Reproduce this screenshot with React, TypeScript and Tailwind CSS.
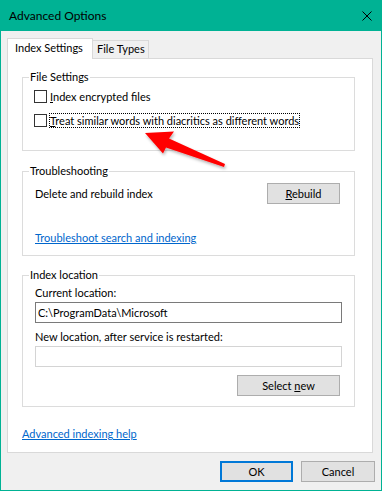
import React from "react";

function Check({ label, accel, focused }: { label: string; accel: string; focused?: boolean }) {
  return (
    <div className="flex h-[16px] items-center">
      <div className="h-[13px] w-[13px] border border-[#333333] bg-white" />
      <span
        className={
          "ml-[2px] whitespace-nowrap border leading-[13px] " +
          (focused ? "border-dotted border-black" : "border-transparent")
        }
      >
        <u>{accel}</u>
        {label}
      </span>
    </div>
  );
}

function Group({ title, className, children }: { title: string; className: string; children: React.ReactNode }) {
  return (
    <div className={"relative w-[333px] border border-[#dcdcdc] " + className}>
      <span className="absolute -top-[9px] left-[6px] whitespace-nowrap bg-white px-[1px] leading-[16px]">{title}</span>
      {children}
    </div>
  );
}

export default function App() {
  return (
    <div className="relative flex h-[491px] w-[382px] flex-col border-x border-b border-[#00b294] bg-[#f0f0f0] font-['Lato',sans-serif] text-[11px] text-black">
      <div className="flex h-[31px] shrink-0 items-center justify-between bg-[#00b294] pl-[8px] pr-[9px]">
        <span className="text-[12px] leading-[16px]">Advanced Options</span>
        <svg width="10" height="10" viewBox="0 0 10 10" className="mt-px">
          <path d="M0.5 0.5 L9.5 9.5 M9.5 0.5 L0.5 9.5" stroke="#000" strokeWidth="1" />
        </svg>
      </div>
      <div className="flex flex-col px-[6px]">
        <div className="relative z-10 -mb-px mt-[7px] flex items-end">
          <div className="h-[21px] w-[86px] whitespace-nowrap border-x border-t border-[#d9d9d9] bg-white pl-[7px] pt-[1px] leading-[16px]">
            Index Settings
          </div>
          <div className="mb-px h-[18px] w-[56px] whitespace-nowrap border-r border-t border-[#d9d9d9] bg-[#f0f0f0] pl-[4px] leading-[16px]">
            File Types
          </div>
        </div>
        <div className="flex h-[395px] w-[366px] flex-col border border-[#d9d9d9] bg-white pl-[14px]">
          <Group title="File Settings" className="mt-[18px] h-[74px] pl-[11px] pt-[10px]">
            <div className="flex flex-col gap-[8px]">
              <Check accel="I" label="ndex encrypted files" />
              <Check accel="T" label="reat similar words with diacritics as different words" focused />
            </div>
          </Group>
          <Group title="Troubleshooting" className="mt-[20px] h-[85px] pl-[12px] pr-[14px] pt-[11px]">
            <div className="flex h-[21px] items-center justify-between">
              <span className="leading-[16px]">Delete and rebuild index</span>
              <button className="h-[21px] w-[73px] border border-[#adadad] bg-[#e1e1e1] leading-[16px]">
                <u>R</u>ebuild
              </button>
            </div>
            <div className="mt-[26px] leading-[16px]">
              <span className="text-[#0066cc] underline">Troubleshoot search and indexing</span>
            </div>
          </Group>
          <Group title="Index location" className="mt-[19px] flex h-[132px] flex-col pl-[12px] pr-[14px] pt-[9px]">
            <div className="leading-[16px]">Current location:</div>
            <div className="mt-px flex h-[21px] w-[307px] items-center border border-[#7a7a7a] pl-[2px] leading-[16px]">
              C:\ProgramData\Microsoft
            </div>
            <div className="mt-[6px] leading-[16px]">New location, after service is restarted:</div>
            <div className="mt-px h-[21px] w-[307px] border border-[#d4d4d4] bg-white" />
            <button className="mt-[8px] h-[21px] w-[103px] self-end border border-[#adadad] bg-[#e1e1e1] leading-[16px]">
              Select <u>n</u>ew
            </button>
          </Group>
          <div className="mt-[19px] leading-[16px]">
            <span className="text-[#0066cc] underline">Advanced indexing help</span>
          </div>
        </div>
        <div className="mt-[8px] flex justify-end gap-[8px]">
          <button className="h-[21px] w-[73px] border-2 border-[#0078d7] bg-[#e1e1e1] leading-[16px]">OK</button>
          <button className="h-[21px] w-[74px] border border-[#adadad] bg-[#e1e1e1] leading-[16px]">Cancel</button>
        </div>
      </div>
      <svg
        className="pointer-events-none absolute -left-px top-0"
        width="382"
        height="491"
        viewBox="0 0 382 491"
      >
        <defs>
          <filter id="sh" x="-20%" y="-20%" width="140%" height="160%">
            <feDropShadow dx="1" dy="2" stdDeviation="1.5" floodColor="#000" floodOpacity="0.3" />
          </filter>
        </defs>
        <polygon
          points="145,133 174,131.5 169,138.5 225,164 224,167 166,147.5 163,153.5"
          fill="#ff0000"
          filter="url(#sh)"
        />
      </svg>
    </div>
  );
}
